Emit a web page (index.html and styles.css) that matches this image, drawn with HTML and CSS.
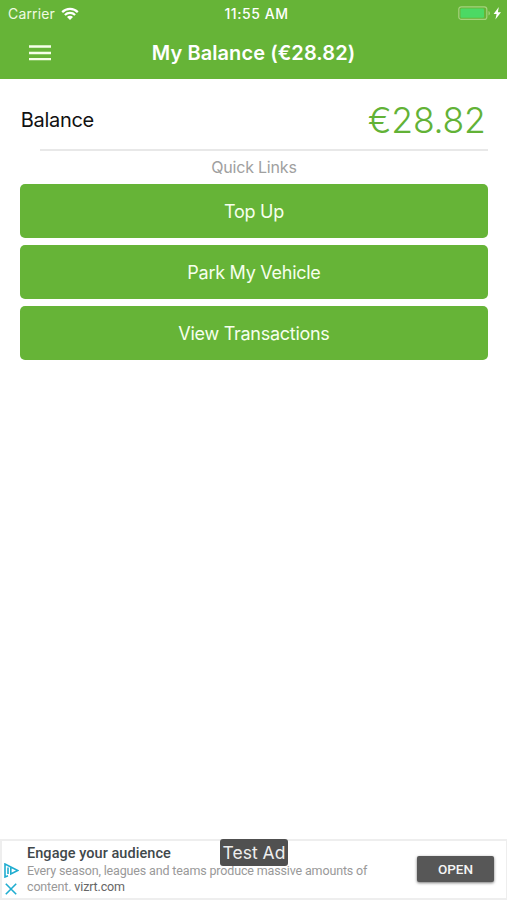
FILE: index.html
```html
<!DOCTYPE html>
<html lang="en">
<head>
<meta charset="utf-8">
<title>My Balance</title>
<link rel="stylesheet" href="styles.css">
</head>
<body>
<div class="app">
  <header class="header">
    <div class="status">
      <div class="carrier"><span class="carrier-name">Carrier</span>
        <svg class="wifi" viewBox="0 0 18 13" width="18" height="13"><path d="M1.2 5.1a11 11 0 0 1 15.6 0M3.9 8a7.2 7.2 0 0 1 10.2 0" fill="none" stroke="#fff" stroke-width="2.2"/><path d="M6 10.1a4.2 4.2 0 0 1 6 0L9 13z" fill="#fff"/></svg>
      </div>
      <span class="time">11:55 AM</span>
      <svg class="battery" viewBox="0 0 44 15" width="44" height="15"><rect x=".8" y=".8" width="28" height="12.6" rx="2.5" fill="none" stroke="#a5d27e" stroke-width="1.2"/><rect x="2.5" y="2.4" width="23.5" height="9.4" rx="1" fill="#4cd964"/><path d="M30.5 5v4.5q1.4-.5 1.4-2.2T30.5 5z" fill="#a5d27e"/><path d="M40.8 1L35.6 8h3l-1.2 5.5L43 6.2h-3.1z" fill="#fff"/></svg>
    </div>
    <div class="nav">
      <svg class="menu" viewBox="0 0 22 16" width="22" height="16"><path d="M0 1.5h22M0 8h22M0 14.1h22" stroke="#f6ffe9" stroke-width="2.4"/></svg>
      <h1 class="title">My Balance (€28.82)</h1>
    </div>
  </header>
  <main class="content">
    <div class="balance"><span class="label">Balance</span><span class="amount">€28.82</span></div>
    <hr class="divider">
    <h2 class="caption">Quick Links</h2>
    <div class="links">
      <button class="link">Top Up</button>
      <button class="link">Park My Vehicle</button>
      <button class="link">View Transactions</button>
    </div>
  </main>
  <footer class="ad">
    <div class="ad-icons">
      <svg viewBox="0 0 15 15" width="15" height="15"><path d="M4 12.8L1 14V1l12.7 6.5L6.8 11V4.8M4 4.6V11" fill="none" stroke="#20add0" stroke-width="1.6"/></svg>
      <svg viewBox="0 0 12 12" width="12" height="12"><path d="M.8.8l10.4 10.4M11.2.8L.8 11.2" stroke="#20add0" stroke-width="1.6"/></svg>
    </div>
    <div class="ad-copy">
      <strong class="ad-title">Engage your audience</strong>
      <div class="ad-text">Every season, leagues and teams produce massive amounts of</div>
      <div class="ad-text">content. <span class="site">vizrt.com</span></div>
    </div>
    <button class="open">OPEN</button>
    <span class="badge">Test Ad</span>
  </footer>
</div>
</body>
</html>
```
FILE: styles.css
```css
* { box-sizing: border-box; }
body { margin: 0; background: #fff; font-family: Inter, "Liberation Sans", sans-serif; }
button { border: 0; padding: 0; font: inherit; }
.app { height: 900px; display: flex; flex-direction: column; overflow: hidden; }
.header { height: 79px; background: #66b437; color: #fff; }
.status { height: 27px; display: grid; grid-template-columns: 1fr auto 1fr; align-items: center; padding: 0 5px 0 8px; }
.carrier { display: flex; align-items: center; gap: 6px; font-size: 14px; letter-spacing: .15px; color: #effbe2; }
.wifi { margin-top: -1px; }
.time { font-size: 14px; font-weight: 550; letter-spacing: .55px; padding-left: 3px; }
.battery { justify-self: end; }
.nav { height: 52px; display: grid; grid-template-columns: 70px 1fr 70px; align-items: center; }
.menu { margin-left: 29px; }
.title { margin: 0; font-size: 20px; line-height: 24px; font-weight: 580; letter-spacing: .08px; text-align: center; }
.content { flex: 1; padding: 0 19.5px 0 20.4px; }
.balance { height: 70px; padding: 12px 2px 0 0; display: flex; justify-content: space-between; align-items: center; }
.label { padding-left: .4px; font-size: 20px; letter-spacing: -.3px; color: #111; }
.amount { padding-top: 1px; font-size: 35.5px; font-weight: 360; letter-spacing: -.25px; color: #62b236; }
.divider { margin: 0 0 0 19.6px; border: 0; height: 2px; background: #e8e8e8; }
.caption { margin: 0; height: 33px; line-height: 33px; text-align: center; font-size: 16px; font-weight: 400; letter-spacing: -.2px; color: #a0a0a0; }
.links { padding-top: .4px; display: flex; flex-direction: column; gap: 7.5px; }
.link { height: 53.5px; border-radius: 5px; padding-top: .9px; background: #66b437; color: #f6ffed; font-size: 18px; letter-spacing: -.27px; }
.ad { position: relative; height: 61px; display: flex; border: 2px solid #eee; border-width: 2px 1px 2px 2px; background: #fff; font-family: Roboto, sans-serif; }
.ad-icons { width: 25px; padding: 22px 0 0 2px; display: flex; flex-direction: column; align-items: flex-start; gap: 5px; }
.ad-icons svg:last-child { margin-left: 1px; }
.ad-copy { width: 379px; padding-top: 3px; font-size: 12.5px; line-height: 16px; letter-spacing: -.15px; color: #999; white-space: nowrap; }
.ad-title { display: block; font-size: 14.5px; line-height: 19px; font-weight: 500; letter-spacing: .05px; color: #3f484b; }
.site { color: #666; }
.open { align-self: flex-start; margin: 15px 0 0 11px; width: 77px; height: 26px; border-radius: 2px; background: #575757; color: #f5f5f5; font-size: 13.5px; font-weight: 500; box-shadow: 0 1px 3px #777; }
.badge { position: absolute; left: 218px; top: -2px; width: 68px; height: 27px; border-radius: 3px; background: #505050; color: #eee; font: 17.5px/28px Inter, sans-serif; text-align: center; }
```
